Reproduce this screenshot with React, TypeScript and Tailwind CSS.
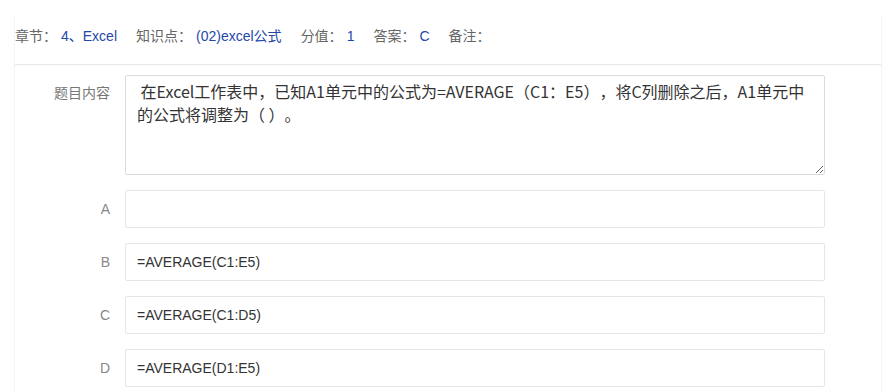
import { useState } from "react";

const FONT = {
  fontFamily: '"Liberation Sans", Arial, "Noto Sans CJK SC", sans-serif',
};

const meta = [
  { label: "章节：", value: "4、Excel" },
  { label: "知识点：", value: "(02)excel公式" },
  { label: "分值：", value: "1" },
  { label: "答案：", value: "C" },
  { label: "备注：", value: "" },
];

const options = [
  { key: "A", text: "" },
  { key: "B", text: "=AVERAGE(C1:E5)" },
  { key: "C", text: "=AVERAGE(C1:D5)" },
  { key: "D", text: "=AVERAGE(D1:E5)" },
];

export default function App() {
  const [content, setContent] = useState(
    " 在Excel工作表中，已知A1单元中的公式为=AVERAGE（C1：E5），将C列删除之后，A1单元中\n的公式将调整为（ ）。"
  );

  return (
    <div className="w-full h-[392px] bg-white overflow-hidden" style={FONT}>
      <div className="mx-[14px] mt-[17px] border-x border-[#f4f4f4] h-[400px]">
        {/* meta header */}
        <div className="h-[48px] pt-[9px] border-b border-[#e8e8e8] flex items-start text-[14px] leading-[20px]">
          {meta.map((m) => (
            <div key={m.label} className="flex mr-[19px]">
              <span className="text-[#666]">{m.label}</span>
              {m.value && <span className="ml-[4px] text-[#2547a9]">{m.value}</span>}
            </div>
          ))}
        </div>

        {/* question */}
        <div className="mt-[10px] flex gap-[15px]">
          <div className="w-[95px] text-right text-[14px] leading-[20px] pt-[8px] text-[#777]">
            题目内容
          </div>
          <textarea
            value={content}
            onChange={(e) => setContent(e.target.value)}
            className="w-[700px] h-[100px] border border-[#dcdcdc] rounded-[2px] pl-[11px] pr-[2px] pt-[4px] text-[16px] leading-[23px] text-[#333] outline-none [text-spacing-trim:space-all]"
            style={{ fontFamily: '"Noto Sans CJK SC", "Liberation Sans", sans-serif' }}
          />
        </div>

        {/* options */}
        {options.map((o) => (
          <div key={o.key} className="mt-[15px] flex items-center gap-[15px]">
            <div className="w-[95px] text-right text-[14px] text-[#888]">{o.key}</div>
            <input
              defaultValue={o.text}
              className="w-[700px] h-[38px] border border-[#e6e6e6] rounded-[2px] px-[11px] text-[14px] text-[#333] outline-none"
              style={FONT}
            />
          </div>
        ))}
      </div>
    </div>
  );
}
